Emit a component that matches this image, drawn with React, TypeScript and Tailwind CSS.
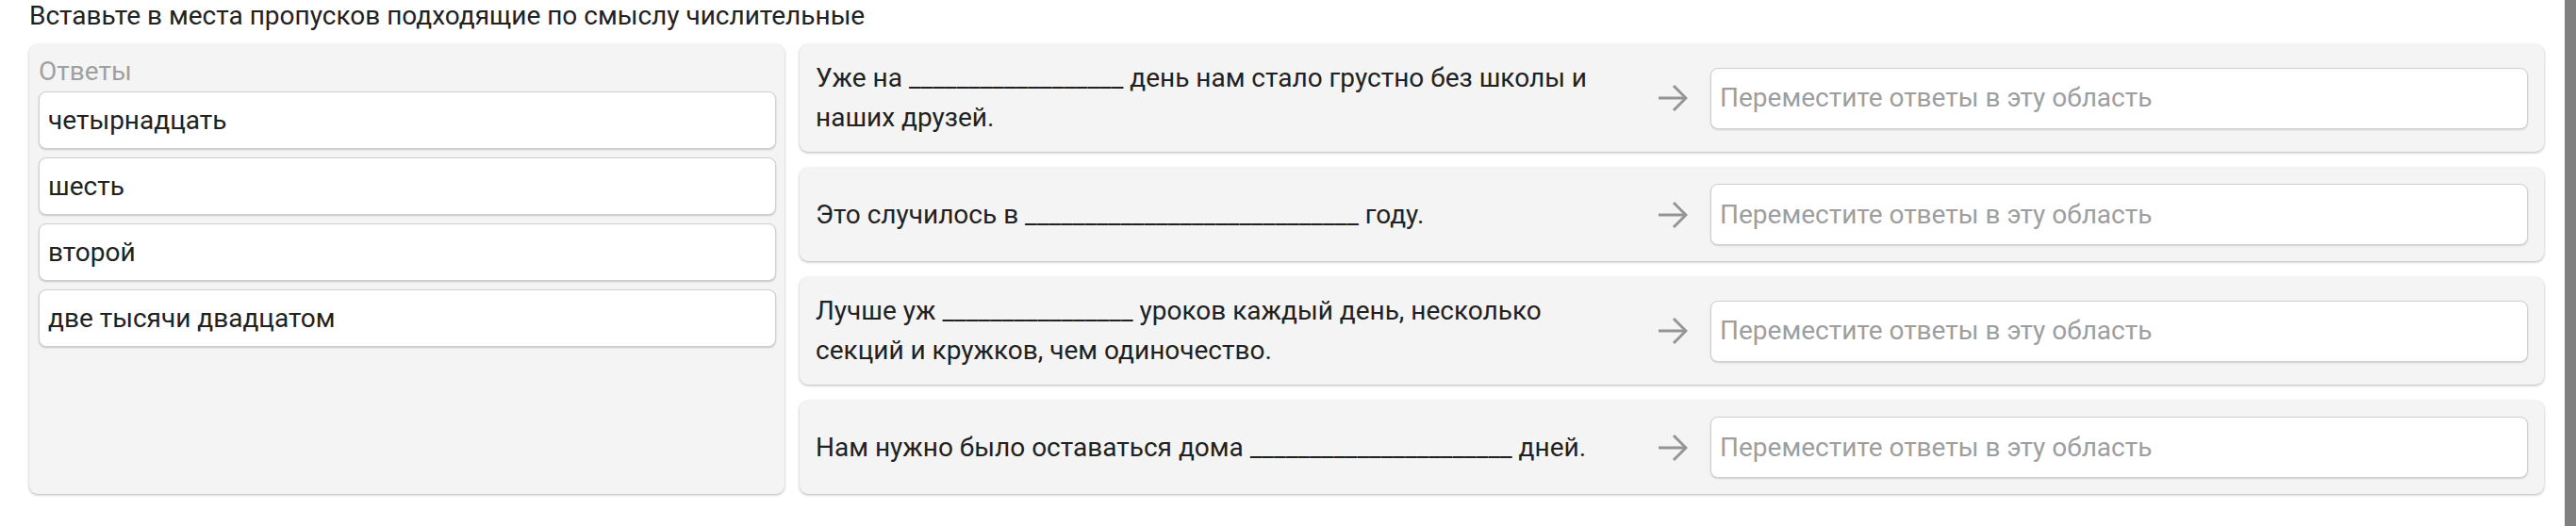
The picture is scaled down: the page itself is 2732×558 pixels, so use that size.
import React from "react";

const answers = ["четырнадцать", "шесть", "второй", "две тысячи двадцатом"];

const rows: string[] = [
  "Уже на __________________ день нам стало грустно без школы и наших друзей.",
  "Это случилось в ____________________________ году.",
  "Лучше уж ________________ уроков каждый день, несколько секций и кружков, чем одиночество.",
  "Нам нужно было оставаться дома ______________________ дней.",
];

function Arrow() {
  return (
    <svg width="32" height="32" viewBox="0 0 32 32" fill="none" stroke="#949494" strokeWidth="3" strokeLinecap="butt" strokeLinejoin="miter">
      <path d="M1 16 H29" />
      <path d="M17 3 L30 16 L17 29" />
    </svg>
  );
}

export default function App() {
  return (
    <div className="flex w-[2732px] h-[558px] bg-white text-[#212121]" style={{ fontFamily: "Roboto, 'Noto Sans', sans-serif" }}>
      <div className="flex-1 flex flex-col pl-[31px] pr-[22px]">
        <div className="text-[28px] leading-[34px] h-[47px]">Вставьте в места пропусков подходящие по смыслу числительные</div>
        <div className="flex gap-[16px] items-stretch">
          <div className="w-[801px] shrink-0 bg-[#f4f4f4] rounded-[9px] shadow-[0_1px_3px_rgba(0,0,0,0.3)] pl-[10px] pr-[9px] pt-[10px]">
            <div className="text-[28px] leading-[38px] text-[#a0a0a0]">Ответы</div>
            <div className="mt-[2px] flex flex-col gap-[9px]">
              {answers.map((a) => (
                <div key={a} className="h-[61px] bg-white border border-[#cfcfcf] rounded-[8px] shadow-[0_1px_2px_rgba(0,0,0,0.2)] flex items-center px-[9px] text-[28px]">
                  {a}
                </div>
              ))}
            </div>
          </div>
          <div className="flex-1 flex flex-col gap-[17px]">
            {rows.map((r, i) => (
              <div key={i} className="bg-[#f4f4f4] rounded-[9px] shadow-[0_1px_3px_rgba(0,0,0,0.3)] px-[17px] py-[15px]">
                <div className="flex items-center min-h-[69px]">
                  <div className="w-[862px] shrink-0 text-[28px] leading-[42px]">{r}</div>
                  <div className="w-[87px] shrink-0 flex justify-end pr-[24px]">
                    <Arrow />
                  </div>
                  <div className="flex-1 h-[65px] bg-white border border-[#cfcfcf] rounded-[8px] shadow-[0_1px_2px_rgba(0,0,0,0.15)] flex items-center px-[9px] text-[28px] text-[#9e9e9e]">
                    Переместите ответы в эту область
                  </div>
                </div>
              </div>
            ))}
          </div>
        </div>
      </div>
      <div className="w-[12px] bg-[#808080]" />
    </div>
  );
}
